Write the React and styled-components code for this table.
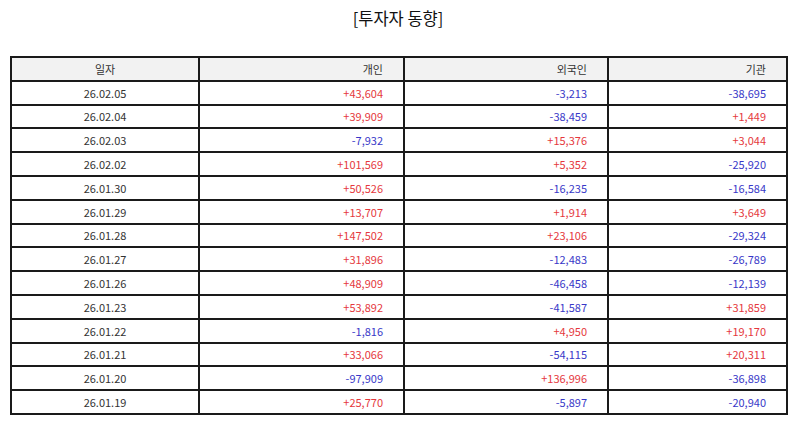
import React from 'react';
import styled, { createGlobalStyle } from 'styled-components';

const GlobalStyle = createGlobalStyle`
  html, body {
    margin: 0;
    padding: 0;
    background: #fff;
  }
  body {
    font-family: "Noto Sans CJK KR", "Noto Sans", sans-serif;
  }
`;

const Page = styled.div`
  width: 794px;
  height: 425px;
  padding: 0 8px 0 10px;
  box-sizing: border-box;
`;

const Title = styled.h1`
  margin: 0;
  height: 56px;
  padding-top: 6px;
  box-sizing: border-box;
  text-align: center;
  font-size: 16.5px;
  font-weight: 400;
  line-height: 24px;
  color: #111;
`;

const Table = styled.table`
  width: 776px;
  border-collapse: collapse;
  table-layout: fixed;
  font-size: 11px;
  color: #333;
`;

const Col = styled.col`
  width: ${({ w }) => w}px;
`;

const Th = styled.th`
  height: 21.8px;
  padding: 0 20px;
  border: 2px solid #1a1a1a;
  background: #f2f2f2;
  font-weight: 400;
  text-align: ${({ center }) => (center ? 'center' : 'right')};
`;

const Td = styled.td`
  height: 21.8px;
  padding: 0 20px;
  border: 2px solid #1a1a1a;
  text-align: ${({ center }) => (center ? 'center' : 'right')};
  color: ${({ value }) =>
    value === undefined ? '#333' : value.startsWith('-') ? '#3838c8' : '#e5383d'};
`;

const rows = [
  ['26.02.05', '+43,604', '-3,213', '-38,695'],
  ['26.02.04', '+39,909', '-38,459', '+1,449'],
  ['26.02.03', '-7,932', '+15,376', '+3,044'],
  ['26.02.02', '+101,569', '+5,352', '-25,920'],
  ['26.01.30', '+50,526', '-16,235', '-16,584'],
  ['26.01.29', '+13,707', '+1,914', '+3,649'],
  ['26.01.28', '+147,502', '+23,106', '-29,324'],
  ['26.01.27', '+31,896', '-12,483', '-26,789'],
  ['26.01.26', '+48,909', '-46,458', '-12,139'],
  ['26.01.23', '+53,892', '-41,587', '+31,859'],
  ['26.01.22', '-1,816', '+4,950', '+19,170'],
  ['26.01.21', '+33,066', '-54,115', '+20,311'],
  ['26.01.20', '-97,909', '+136,996', '-36,898'],
  ['26.01.19', '+25,770', '-5,897', '-20,940'],
];

export default function App() {
  return (
    <>
      <GlobalStyle />
      <Page>
        <Title>[투자자 동향]</Title>
        <Table>
          <colgroup>
            <Col w={188} />
            <Col w={205} />
            <Col w={204} />
            <Col w={179} />
          </colgroup>
          <thead>
            <tr>
              <Th center>일자</Th>
              <Th>개인</Th>
              <Th>외국인</Th>
              <Th>기관</Th>
            </tr>
          </thead>
          <tbody>
            {rows.map(([date, ...vals]) => (
              <tr key={date}>
                <Td center>{date}</Td>
                {vals.map((v, i) => (
                  <Td key={i} value={v}>{v}</Td>
                ))}
              </tr>
            ))}
          </tbody>
        </Table>
      </Page>
    </>
  );
}
